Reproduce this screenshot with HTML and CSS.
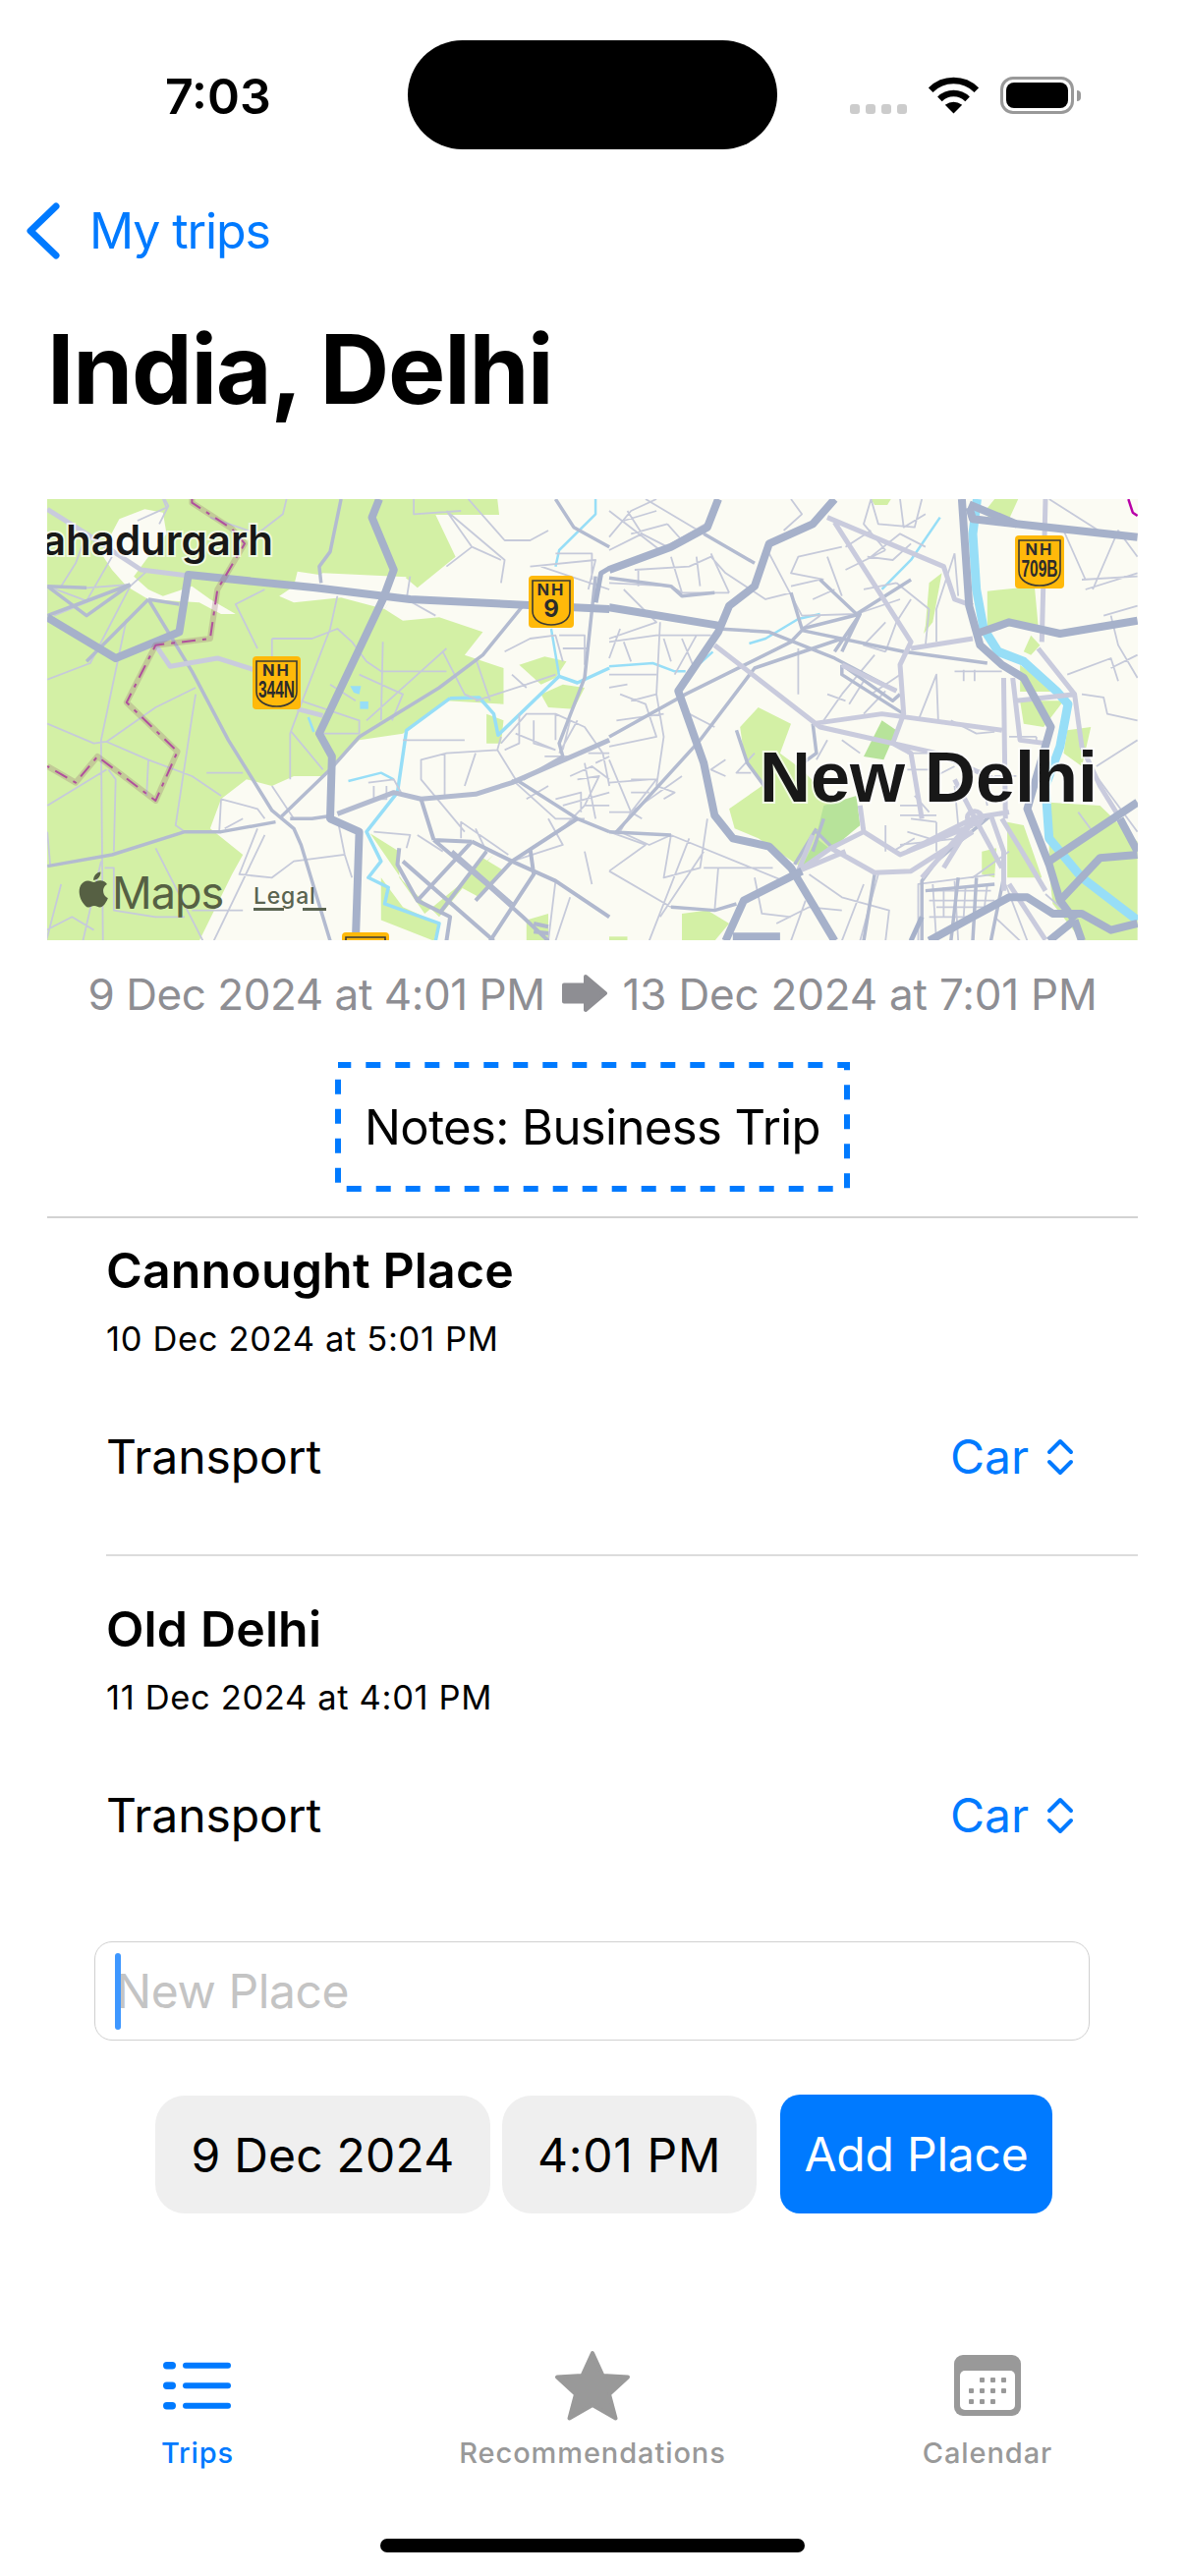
FILE: index.html
```html
<!DOCTYPE html>
<html lang="en">
<head>
<meta charset="utf-8">
<title>India, Delhi</title>
<link rel="stylesheet" href="styles.css">
</head>
<body>
<div class="phone">
  <div class="island"></div>
  <header class="status">
    <span class="time">7:03</span>
    <div class="status-icons">
      <div class="signal"><i></i><i></i><i></i><i></i></div>
      <svg class="wifi" viewBox="0 0 51 38"><path class="wifi-arc" d="M2.2 13.7A33 33 0 0 1 48.8 13.7"/><path class="wifi-arc" d="M11.4 22.9A20 20 0 0 1 39.6 22.9"/><path class="wifi-dot" d="M25.5 37.5L16.8 28.8Q25.5 22.5 34.2 28.8Z"/></svg>
      <div class="battery"><div class="battery-fill"></div></div>
      <div class="battery-nub"></div>
    </div>
  </header>
  <nav class="back">
    <svg class="back-chevron" viewBox="0 0 40 62"><path d="M32 6L6 31L32 56"/></svg>
    <span>My trips</span>
  </nav>
  <h1 class="title">India, Delhi</h1>
  <div class="map">
    <svg class="map-svg" viewBox="0 0 1110 449">
      <g transform="matrix(0.37 0 0 0.3333 -8 -8)">
        <path class="green" d="M0,24L1260,24L1265,72L1090,72L1145,200L1040,295L1005,262L950,360L1000,395L1100,385L1220,430L1170,500L1277,540L1277,650L1120,640L1000,740L880,760L780,870L700,870L640,900L570,880L500,940L470,1030L560,1110L530,1170L440,1373L0,1373Z"/>
        <path class="cream" d="M220,85L290,55L340,65L350,130L300,200L260,260L300,300L340,320L420,290L470,330L540,375L500,375L440,340L300,330L240,290L200,240L170,190Z"/>
        <path class="cream" d="M710,245L770,255L780,250L1010,262L950,360L830,325L700,340L660,320L700,290Z"/>
        <path class="green" d="M910,1045L1000,1190L1100,1300L1180,1190L1250,1110L1180,1180L1060,1290L990,1180L990,1100Z"/>
        <path class="green" d="M940,1180L1000,1270L1100,1320L1085,1373L940,1310Z"/>
        <path class="green" d="M1220,1120L1280,1160L1210,1240L1160,1210Z"/>
        <path class="green" d="M1320,530L1390,505L1450,520L1420,570L1380,590Z"/>
        <path class="green" d="M1380,620L1440,590L1500,600L1470,665L1400,660Z"/>
        <path class="green" d="M1230,680L1277,700L1270,770L1230,770Z"/>
        <path class="green" d="M1340,1310L1400,1290L1400,1373L1340,1373Z"/>
        <path class="water w3" d="M1130,632L1210,630L1250,680L1262,745L1430,565L1480,585L1568,540"/>
        <path class="water w3" d="M1130,632L1010,730L985,920L900,1040L940,1130L905,1180L960,1210L950,1260L1100,1320L1090,1373"/>
        <path class="water w2" d="M1408,420L1430,565"/>
        <path class="water w2" d="M1530,24L1530,70L1430,180L1420,230"/>
        <path class="water w2" d="M850,885L940,860L975,880"/>
        <path class="water w2" d="M740,690L755,735"/>
        <path class="water-fill" d="M855,595L885,595L880,620L865,615Z"/>
        <path class="water-fill" d="M882,642L905,642L905,665L882,665Z"/>
        <path class="thin" d="M345,24L355,45L330,100M22,290L130,295L250,285M22,575L140,525L250,290L300,240M40,380L250,285M200,200L130,335L22,290M240,390L170,760L175,1373M22,710L150,770L185,765L320,660L430,600M185,765L300,820L420,870L500,930M22,960L185,850M22,1040L30,1140M430,620L420,690L375,1020L400,1040M190,850L210,880L205,1100M320,1090L450,1373M460,860L560,860M300,820L295,930M600,480L540,345L620,300M640,450L750,450L820,420L860,460L900,520L940,550L1120,550M640,450L640,510M820,320L800,420L720,650L690,740L690,880M690,730L780,850M720,640L880,700L880,740L770,740M880,560L1000,620L970,700M945,460L940,700M1120,480L1040,560L900,700M1110,490L1170,620L1210,640M1170,1040L1050,880L1050,820L1120,800L1260,790L1270,750M1000,760L1170,760M1115,800L1115,930M1260,790L1310,880M1280,490L1350,450L1420,440L1440,520M1340,590L1420,560M1270,770L1340,680L1420,680L1500,720L1550,800L1568,900M1310,740L1420,790M1200,640L1340,590M1480,700L1430,800M1500,830L1530,1000M1300,880L1420,1000L1500,1000M1120,60L1280,210L1270,280M1180,24L1280,150L1350,150L1400,120M1350,230L1530,210L1510,300M1420,190L1520,190L1520,270M1380,230L1568,300M600,1030L550,1170L640,1180L700,1130L840,1110M820,1000L840,1110L860,1180M1010,1090L1020,1050L920,1040M500,940L495,1040M905,890L975,880L1000,930M920,900L920,940L955,940L955,900M620,1000L600,970L500,940M480,1373L620,1050M120,1373L170,1130M1160,1060L1160,1010L1290,1110M1420,1190L1400,1373M1460,1240L1420,1373M20,1340L90,1300L150,1340M270,90L350,50L340,24M680,24L670,70L600,130L470,80M1030,24L1030,70L1160,60M1020,260L1010,330L1090,380M1200,510L1240,640M800,590L870,640M560,1000L510,1030M1430,1040L1500,960M1440,960L1568,920M1460,870L1520,840L1568,880M1430,440L1500,440L1500,530M1440,480L1510,480M1320,680L1320,770L1280,790M1360,700L1360,770L1420,790M1420,680L1420,760M1510,800L1568,800M1480,880L1540,870L1500,960L1568,960M1420,940L1490,920L1490,980M1400,1000L1440,1080L1300,1130M1500,1100L1520,1200M1200,1030L1230,1100M1110,1100L1040,1050M180,1150L205,1150L205,1280L320,1300L400,1300M60,1200L20,1370M20,290L20,370M130,130L100,220L60,290M640,900L700,1000M420,1280L560,1280M1120,230L1190,170L1270,210M1190,170L1120,60M1300,560L1340,600M1390,810L1460,810M1460,700L1440,790M1530,830L1568,810M1340,940L1400,900M1200,800L1170,900"/>
        <path class="mid" d="M830,24L800,185L770,230L775,280M1420,24L1470,110L1568,170M1530,260L1500,570L1430,770L1440,810L1330,880M300,330L420,550L520,760L640,975L700,1030L720,1080L800,1373M22,1145L200,1110L400,1040L500,1040L650,1010M660,1000L800,850L880,750L1100,600L1220,500L1330,350M690,1000L750,1000L810,990M1310,880L1480,1000L1568,1040M22,290L130,295M250,285L130,380L22,290M22,380L250,285M130,520L300,330M300,330L385,345"/>
        <path class="mid wide" d="M820,985L975,920L1050,940L1200,925L1300,890L1568,760"/>
        <path class="grid" d="M1480,1000L1300,1130L1200,1250M990,1090L985,1140L1040,1250L1130,1300L1120,1373M1085,1065L1230,1200L1330,1300L1400,1373M1135,1100L1300,1260M1190,1070L1040,1250M1230,1100L1100,1290M1350,1090L1360,1170L1240,1373M1000,1130L1250,1373M1085,1065L1050,940M1190,1070L1300,1130L1420,1190L1568,1300M1085,1065L1190,1070M1360,1320L1400,1330M1360,1345L1400,1350"/>
        <path class="light" d="M22,55L130,130L280,240L410,258M320,470L360,535L490,510L590,545M710,665L780,685"/>
        <path class="major" d="M935,24L915,80L975,240L945,330L770,740L805,810L800,1000L880,1040L870,1373"/>
        <path class="major" d="M22,385L210,510L385,430L410,255L760,295L1020,330L1568,360"/>
        <path class="major thinner" d="M1568,235L1545,250L1530,340"/>
        <path class="border-halo" d="M420,24L420,35L530,115L565,160L490,300L470,450L320,470L240,645L380,795L320,945L160,810L100,890L22,840"/>
        <path class="border-dash" d="M420,24L420,35L530,115L565,160L490,300L470,450L320,470L240,645L380,795L320,945L160,810L100,890L22,840"/>
      </g>
      <g transform="matrix(0.37 0 0 0.3333 572 -8)">
        <path class="green" d="M720,24L775,24L765,42L730,42Z"/>
        <path class="green" d="M1060,24L1125,24L1100,85L1130,100L1060,95L1030,65Z"/>
        <path class="green" d="M1040,305L1170,290L1180,410L1130,410L1040,420Z"/>
        <path class="green" d="M1130,530L1230,612L1130,612Z"/>
        <path class="green" d="M1130,640L1250,640L1195,720L1140,710Z"/>
        <path class="green" d="M1260,730L1325,720L1300,840L1250,800Z"/>
        <path class="green" d="M1160,440L1185,470L1160,500L1140,490Z"/>
        <path class="green" d="M1095,1010L1140,1020L1190,1180L1095,1180Z"/>
        <path class="green" d="M1025,1100L1065,1090L1060,1180L1025,1170Z"/>
        <path class="green" d="M1210,950L1350,960L1453,1070L1453,1373L1300,1373L1220,1260L1210,1160Z"/>
        <path class="green" d="M360,720L410,660L500,710L470,800L530,850L600,930L690,1020L600,1090L530,1150L410,1060L345,1030L330,970L420,900L370,800Z"/>
        <path class="green-dark" d="M590,960L680,930L690,1020L620,1085L570,1050Z"/>
        <path class="green-dark" d="M700,810L750,700L790,730L755,820Z"/>
        <path class="green-dark" d="M530,1145L570,1060L605,1090Z"/>
        <path class="green" d="M200,1290L270,1280L330,1320L290,1373L200,1373Z"/>
        <path class="green" d="M880,280L915,250L890,400L865,435L870,410Z"/>
        <path class="green" d="M0,1360L50,1360L50,1373L0,1373Z"/>
        <path class="water river" d="M1012,24L1000,130L1010,300L1030,420L1070,490L1140,520L1230,610L1262,650L1240,780L1200,900L1210,1060L1300,1180L1453,1310"/>
        <path class="water w2" d="M0,535L120,525L180,550L210,550"/>
        <path class="water w2" d="M385,465L430,450L520,390L580,375"/>
        <path class="water w2" d="M750,300L830,210L910,80"/>
        <path class="water w2" d="M250,525L285,490"/>
        <path class="thin" d="M0,140L60,60L130,24M100,24L260,130L300,24M0,280L170,290L200,310L330,310M70,240L220,230L280,200L320,250L430,330L500,310M440,190L530,380L680,375M500,290L580,270L680,375L800,330M590,270L500,250L520,200L640,170M30,420L0,510M0,460L130,440L280,440M130,560L0,560M140,400L130,620L150,750L130,900M30,620L100,650L130,750L0,780M0,820L60,980L200,870M60,880L130,880L60,980L90,1000M60,980L30,1040L110,1080L170,1050L480,1190M0,1040L100,1080L0,1160M220,1060L110,1373M140,1300L260,1100M260,1150L450,1150M320,820L280,850L320,870M400,800L350,860L390,860M850,1373L850,1200L1060,1170M890,1200L900,1373M950,1190L960,1373M1010,1190L1000,1373M690,1373L740,1170M640,1373L700,1200M550,1170L640,1240L770,1280L760,1373M900,1270L1060,1270M1210,24L1360,130M1453,200L1400,120L1330,300M1300,270L1453,260M1453,350L1360,380M1380,380L1400,470L1453,570M1260,560L1380,510L1400,580M1300,620L1360,630L1370,680L1453,700M1340,840L1453,760M1340,870L1453,1040M1290,980L1330,1040M0,60L140,180L280,90M40,300L130,400L0,450M180,560L240,440M720,24L740,100L840,110L860,24M710,200L780,210L830,160M650,240L760,180M950,190L900,360L900,460M640,620L730,500M720,620L800,560M850,700L900,560L905,700M940,700L1010,740L1060,735M950,550L1080,550M975,545L975,580M1005,545L1005,580M1100,750L1175,750M1175,750L1175,770M1120,870L1060,870M820,800L900,800M800,990L900,990M820,1040L880,1060M800,1080L960,1060M760,1020L760,1100M1000,1180L1100,1100M1250,120L1310,270M1290,1320L1200,1230M40,90L130,60M60,130L160,100M0,180L90,130L160,170M90,130L50,60M160,100L200,150M80,240L80,290M170,200L200,310M240,200L250,290M280,190L330,310M500,24L530,70L480,120M720,24L700,100L760,180M800,24L810,110L870,70M720,200L800,130L870,170M650,170L720,120M600,200L640,320M700,300L790,280M790,280L880,360M760,400L700,470L760,490M880,360L870,470M830,330L790,400L760,490M950,190L960,320M560,330L620,300M530,420L580,380M40,460L60,520M150,450L170,520M200,450L230,530M0,600L50,590M60,640L130,620M20,700L150,680M220,680L290,720M0,890L110,880M60,920L110,920M130,900L180,920L150,940M0,980L60,980M600,620L650,640M660,650L700,580M590,700L640,620M700,680L760,610M520,480L520,620M640,760L690,800M600,760L570,820M170,1050L150,1180L250,1150L270,1000M0,1160L170,1270M300,1150L290,1280M400,1180L420,1290L500,1300M460,1320L550,1270L640,1280M540,1250L500,1373M590,1300L610,1373M870,1220L1050,1220M880,1250L1060,1250M880,1300L1000,1300M920,1210L920,1300M980,1210L975,1300M1040,1200L1030,1290M1090,1200L1150,1373M1060,1300L1130,1373M820,850L880,850M840,930L880,980M800,960L860,960M830,1000L900,1010M780,1100L840,1060M880,880L950,840M900,1010L900,1100M950,900L960,1020M1020,850L1040,960M1310,300L1453,250M1380,540L1453,500"/>
        <path class="mid" d="M0,750L210,620L500,460L530,425L810,490L1040,525M250,760L400,540L640,450M300,420L440,430L620,510L790,610M640,530L780,640L800,620M640,530L640,560L810,680M500,310L530,420L690,375L640,490M580,270L680,375L830,270M690,375L620,490M0,265L170,290L200,320L290,310M260,130L400,220M0,1040L170,1050M70,980L20,1040M70,980L250,760M170,1270L290,1280L350,1260M560,1100L590,1000M510,1140L570,1030M570,1040L615,1090M350,730L380,830L440,920M560,710L570,800L520,840M700,1373L730,1170M860,1373L860,1190L900,1130L1050,990M870,1220L1060,1200M940,1373L960,1180M1000,1373L1010,1180M1050,1373L1085,1180"/>
        <path class="light wide2" d="M600,80L920,230L950,330L1000,350M620,95L830,460L800,530L810,680L780,770L830,800M1200,24L1190,460M830,480L1000,450M1180,480L1280,620L1300,780L1350,900L1400,990M290,470L580,720L900,800L1060,880M560,710L750,680L1080,730M1080,1000L1130,1090M1130,1090L1200,1220M1120,640L1280,620M1085,570L1090,1000M1110,570L1130,760L1200,770M780,770L830,800L860,1000M640,530L790,610M1050,990L1085,1100L1085,1220M1005,997L820,1100M1005,997L860,1180M1005,997L920,1150M1005,997L1080,1150M1005,997L950,880M1005,997L1100,980M700,1040L610,1090L730,1165L830,1160L1000,1040M700,1040L800,1110L1000,1020M690,960L700,1040M650,1100L520,1160M610,1090L520,1160M560,1050L520,1160M1100,1200L1200,1370"/>
        <circle class="light" cx="1005" cy="997" r="20"/>
        <path class="major" d="M300,24L270,110L170,170L0,240"/>
        <path class="major" d="M620,24L560,100L440,160L400,290L330,350L300,430L190,610L260,830L290,990L340,1060L440,1085L500,1150L620,1373"/>
        <path class="major" d="M0,355L300,410"/>
        <path class="major" d="M970,24L990,350L1020,470L1080,530L1140,570L1215,720L1150,970L1210,1140L1240,1250L1280,1310"/>
        <path class="major" d="M1010,435L1100,400L1240,435L1453,395"/>
        <path class="major" d="M990,40L1120,100L1453,140"/>
        <path class="major" d="M990,50L1000,85L1120,100"/>
        <path class="major" d="M1210,1130L1453,950"/>
        <path class="major" d="M1240,1250L1350,1120L1453,1110"/>
        <path class="major" d="M880,1373L1000,1300L1100,1240L1150,1240L1220,1290L1300,1290L1380,1340L1453,1320"/>
        <path class="major" d="M530,1160L370,1250L320,1373"/>
        <path class="major" d="M1405,1000L1453,1100M1280,1310L1300,1373M1280,1310L1210,1373"/>
        <path class="major" d="M340,1360L470,1360"/>
        <path class="major thinner" d="M860,1300L830,1373"/>
        <path class="boundary" d="M1428,24L1440,65L1453,75"/>
      </g>

      <text class="label-bahadurgarh" x="230" y="57">Bahadurgarh</text>
      <text class="label-delhi" x="725" y="308">New Delhi</text>
      <path class="apple" transform="translate(25.700 376) scale(1.800)" d="M18.71 19.5c-.83 1.24-1.71 2.45-3.05 2.47-1.34.03-1.77-.79-3.29-.79-1.53 0-2 .77-3.27.82-1.31.05-2.3-1.32-3.14-2.53C4.25 17 2.94 12.45 4.7 9.39c.87-1.52 2.43-2.48 4.12-2.51 1.28-.02 2.5.87 3.29.87.78 0 2.26-1.07 3.81-.91.65.03 2.47.26 3.64 1.98-.09.06-2.17 1.28-2.15 3.81.03 3.02 2.65 4.03 2.68 4.04-.03.07-.42 1.44-1.38 2.83M13 3.5c.73-.83 1.94-1.46 2.94-1.5.13 1.17-.34 2.35-1.04 3.19-.69.85-1.83 1.51-2.95 1.42-.15-1.15.41-2.35 1.05-3.11z"/>
      <text class="label-maps" x="66" y="417">Maps</text>
      <text class="label-legal" x="210" y="412">Legal</text>
      <rect class="legal-line" x="210" y="416" width="31" height="3"/>
      <rect class="legal-line" x="260" y="416" width="24" height="3"/>

      <g transform="translate(490 78)">
        <rect class="shield-bg" width="46" height="53" rx="4"/>
        <path class="shield-line" d="M4 5H42V36C42 45 33 50 23 50C13 50 4 45 4 36Z"/>
        <text class="shield-nh" x="23" y="20">NH</text>
        <text class="shield-num big" x="23" y="42">9</text>
      </g>
      <g transform="translate(209 160)">
        <rect class="shield-bg" width="49" height="54" rx="4"/>
        <path class="shield-line" d="M4 5H45V36C45 46 35 51 24.500 51C14 51 4 46 4 36Z"/>
        <text class="shield-nh" x="24.500" y="20">NH</text>
        <text class="shield-num" x="24.500" y="42" textLength="37" lengthAdjust="spacingAndGlyphs">344N</text>
      </g>
      <g transform="translate(985 37)">
        <rect class="shield-bg" width="50" height="54" rx="4"/>
        <path class="shield-line" d="M4 5H46V36C46 46 36 51 25 51C14 51 4 46 4 36Z"/>
        <text class="shield-nh" x="25" y="20">NH</text>
        <text class="shield-num" x="25" y="42" textLength="37" lengthAdjust="spacingAndGlyphs">709B</text>
      </g>
      <g transform="translate(300 441)">
        <rect class="shield-bg" width="48" height="54" rx="4"/>
        <path class="shield-line" d="M4 5H44V36C44 46 34 51 24 51C14 51 4 46 4 36Z"/>
      </g>
    </svg>
  </div>
  <div class="dates">
    <span class="date-from">9 Dec 2024 at 4:01 PM</span>
    <svg class="arrow" viewBox="0 0 48 40"><path d="M3 11.500H25V3L45 20L25 37V28.500H3Z"/></svg>
    <span class="date-to">13 Dec 2024 at 7:01 PM</span>
  </div>
  <div class="notes">
    <svg class="notes-border" viewBox="0 0 524 132"><rect x="3" y="3" width="518" height="126"/></svg>
    <span>Notes: Business Trip</span>
  </div>
  <section class="places">
    <article class="place place-first">
      <h2 class="place-name">Cannought Place</h2>
      <p class="place-date">10 Dec 2024 at 5:01 PM</p>
      <div class="transport">
        <span>Transport</span>
        <span class="picker">Car
          <svg class="updown" viewBox="0 0 28 38"><path d="M3 14L14 3L25 14M3 24L14 35L25 24"/></svg>
        </span>
      </div>
    </article>
    <article class="place">
      <h2 class="place-name">Old Delhi</h2>
      <p class="place-date">11 Dec 2024 at 4:01 PM</p>
      <div class="transport">
        <span>Transport</span>
        <span class="picker">Car
          <svg class="updown" viewBox="0 0 28 38"><path d="M3 14L14 3L25 14M3 24L14 35L25 24"/></svg>
        </span>
      </div>
    </article>
  </section>
  <div class="input">
    <i class="caret"></i>
    <span>New Place</span>
  </div>
  <div class="actions">
    <div class="pill pill-date">9 Dec 2024</div>
    <div class="pill pill-time">4:01 PM</div>
    <div class="add">Add Place</div>
  </div>
  <footer class="tabs">
    <div class="tab tab-active">
      <div class="tab-icon">
        <svg class="ic-list" viewBox="0 0 70 50"><rect x="0" y="1" width="13" height="7.500" rx="3.700"/><rect x="20" y="1.800" width="49" height="6" rx="3"/><rect x="0" y="21.500" width="13" height="7.500" rx="3.700"/><rect x="20" y="22.300" width="49" height="6" rx="3"/><rect x="0" y="42" width="13" height="7.500" rx="3.700"/><rect x="20" y="42.800" width="49" height="6" rx="3"/></svg>
      </div>
      <span>Trips</span>
    </div>
    <div class="tab">
      <div class="tab-icon">
        <svg class="ic-star" viewBox="0 0 78 72"><path d="M39 3L49.500 26L75 27.500L56 45L62.500 69.500L39 56L15.500 69.500L22 45L3 27.500L28.500 26Z"/></svg>
      </div>
      <span>Recommendations</span>
    </div>
    <div class="tab">
      <div class="tab-icon">
        <svg class="ic-cal" viewBox="0 0 68 62"><rect class="cal-body" width="68" height="62" rx="9"/><rect class="cal-page" x="6" y="16" width="56" height="40" rx="5"/><g class="cal-dots"><rect x="26" y="23" width="5" height="5" rx="1"/><rect x="37" y="23" width="5" height="5" rx="1"/><rect x="48" y="23" width="5" height="5" rx="1"/><rect x="15" y="34" width="5" height="5" rx="1"/><rect x="26" y="34" width="5" height="5" rx="1"/><rect x="37" y="34" width="5" height="5" rx="1"/><rect x="48" y="34" width="5" height="5" rx="1"/><rect x="15" y="45" width="5" height="5" rx="1"/><rect x="26" y="45" width="5" height="5" rx="1"/><rect x="37" y="45" width="5" height="5" rx="1"/></g></svg>
      </div>
      <span>Calendar</span>
    </div>
  </footer>
  <div class="home"></div>
</div>
</body>
</html>
```
FILE: styles.css
```css
* { box-sizing: border-box; }
html, body { margin: 0; padding: 0; background: #fff; }
body { font-family: Inter, "Liberation Sans", sans-serif; color: #000; }
h1, h2, p { margin: 0; font: inherit; }

.phone { position: relative; width: 1206px; height: 2622px; overflow: hidden; background: #fff; display: flex; flex-direction: column; }
.island { position: absolute; left: 415px; top: 41px; width: 376px; height: 111px; border-radius: 56px; background: #000; }

.status { height: 160px; display: flex; justify-content: space-between; align-items: flex-start; }
.time { margin: 73px 0 0 168px; font-size: 50px; line-height: 1; font-weight: 600; letter-spacing: 0; }
.status-icons { display: flex; align-items: flex-end; margin: 78px 106px 0 0; }
.signal { display: flex; gap: 6px; margin-right: 22px; }
.signal i { width: 10px; height: 10px; border-radius: 3px; background: #ccc; }
.wifi { width: 51px; height: 38px; margin-right: 22px; }
.wifi-arc { fill: none; stroke: #000; stroke-width: 6.5; }
.wifi-dot { fill: #000; }
.battery { width: 75px; height: 38px; border: 3px solid #999; border-radius: 13px; padding: 3px; }
.battery-fill { width: 100%; height: 100%; background: #000; border-radius: 8px; }
.battery-nub { width: 4px; height: 11px; margin: 0 0 13px 3px; background: #999; border-radius: 0 4px 4px 0; }

.back { height: 167px; display: flex; align-items: flex-start; color: #007aff; font-size: 50px; line-height: 1; }
.back-chevron { width: 40px; height: 62px; margin: 44px 0 0 25px; }
.back-chevron path { fill: none; stroke: #007aff; stroke-width: 7; stroke-linecap: round; stroke-linejoin: round; }
.back span { margin: 50px 0 0 26px; letter-spacing: -1.100px; }

.title { height: 181px; padding-left: 48px; font-size: 98px; line-height: 1; font-weight: 700; letter-spacing: -1.300px; }

.map { margin: 0 48px; height: 449px; background: #fbfbf3; }
.map-svg { display: block; width: 1110px; height: 449px; }
.green { fill: #d3f0a5; }
.green-dark { fill: #b7e39a; }
.cream { fill: #fbfbf3; }
.water, .thin, .mid, .grid, .light, .major, .border-halo, .border-dash, .boundary { fill: none; vector-effect: non-scaling-stroke; stroke-linejoin: round; }
.water { stroke: #97def7; }
.w2 { stroke-width: 2.500px; }
.w3 { stroke-width: 3.500px; }
.river { stroke-width: 9px; }
.water-fill { fill: #97def7; }
.thin { stroke: #c6cada; stroke-width: 1.800px; }
.mid { stroke: #b3bbd0; stroke-width: 3.500px; }
.wide { stroke-width: 5px; }
.grid { stroke: #b0b8ce; stroke-width: 4px; }
.light { stroke: #c9cbdd; stroke-width: 5px; }
.wide2 { stroke-width: 5px; }
.major { stroke: #a6b1ca; stroke-width: 8px; }
.thinner { stroke-width: 5px; }
.border-halo { stroke: rgba(150, 105, 115, .28); stroke-width: 6px; }
.border-dash { stroke: #b0509c; stroke-width: 2px; stroke-dasharray: 14 7 4 7; }
.boundary { stroke: #b800a8; stroke-width: 2.500px; }
.label-bahadurgarh { font-size: 42px; font-weight: 600; text-anchor: end; fill: #181818; stroke: rgba(255,255,255,.7); stroke-width: 4px; paint-order: stroke; }
.label-delhi { font-family: "Liberation Sans", sans-serif; font-size: 72px; font-weight: 700; fill: #181818; stroke: rgba(255,255,255,.7); stroke-width: 4px; paint-order: stroke; }
.apple { fill: #566043; }
.label-maps { font-size: 45px; fill: #566043; letter-spacing: -1px; }
.label-legal { font-size: 23px; font-weight: 500; fill: #5a6450; letter-spacing: .8px; }
.legal-line { fill: #5a6450; }
.shield-bg { fill: #ffb90a; }
.shield-line { fill: none; stroke: #3a3a35; stroke-width: 1.600px; }
.shield-nh { font-size: 16.500px; font-weight: 700; fill: #2f2f2f; text-anchor: middle; letter-spacing: 2px; }
.shield-num { font-family: "Liberation Sans", sans-serif; font-size: 23px; font-weight: 700; fill: #2c2c2c; text-anchor: middle; }
.shield-num.big { font-family: Inter, sans-serif; font-size: 24px; }

.dates { height: 110px; display: flex; align-items: center; justify-content: center; gap: 12px; color: #8e8e93; font-size: 44px; }
.date-from { letter-spacing: -.45px; }
.date-to { letter-spacing: -.2px; }
.arrow { width: 48px; height: 40px; margin: -2px 3px 0 4px; }
.arrow path { fill: #8e8e93; stroke: #8e8e93; stroke-width: 4; stroke-linejoin: round; }

.notes { position: relative; align-self: center; margin-top: 14px; width: 524px; height: 132px; display: flex; align-items: center; justify-content: center; font-size: 49px; letter-spacing: -.6px; }
.notes-border { position: absolute; inset: 0; width: 524px; height: 132px; }
.notes-border rect { fill: none; stroke: #007aff; stroke-width: 6; stroke-dasharray: 15 15; stroke-dashoffset: 1.700; }

.places { margin: 25px 48px 0; border-top: 2px solid #d2d2d2; }
.place { margin-left: 60px; padding: 49px 65px 0 0; height: 343px; }
.place + .place { border-top: 2px solid #dcdcdc; }
.place-first { padding-top: 28px; margin-left: 0; padding-left: 60px; height: 342px; }
.place-name { font-size: 50px; line-height: 1; font-weight: 600; letter-spacing: .15px; }
.place-date { margin-top: 28px; font-size: 34.500px; line-height: 1; letter-spacing: .65px; }
.transport { margin-top: 78px; display: flex; justify-content: space-between; align-items: center; font-size: 48px; line-height: 1; letter-spacing: -.05px; }
.picker { display: flex; align-items: center; gap: 18px; color: #007aff; }
.updown { width: 28px; height: 38px; }
.updown path { fill: none; stroke: #007aff; stroke-width: 4; stroke-linecap: round; stroke-linejoin: round; }

.input { position: relative; margin: 51px 0 0 96px; width: 1013px; height: 101px; border: 1.500px solid #d0d0d0; border-radius: 18px; padding-left: 21px; display: flex; align-items: center; color: #c4c4c4; font-size: 48px; letter-spacing: -.4px; }
.caret { position: absolute; left: 20px; top: 11px; width: 6px; height: 78px; border-radius: 3px; background: #3e97ff; }

.actions { margin: 55px 0 0 158px; display: flex; align-items: flex-end; gap: 12px; font-size: 48px; }
.pill { height: 120px; border-radius: 30px; background: #efefef; display: flex; align-items: center; justify-content: center; }
.pill-date { width: 341px; letter-spacing: .2px; }
.pill-time { width: 259px; letter-spacing: .7px; }
.add { margin-left: 12px; width: 277px; height: 121px; border-radius: 20px; background: #007aff; color: #fff; display: flex; align-items: center; justify-content: center; letter-spacing: -.2px; }

.tabs { margin-top: 137px; display: flex; }
.tab { width: 402px; display: flex; flex-direction: column; align-items: center; color: #999; font-size: 29px; line-height: 1; font-weight: 500; letter-spacing: .9px; }
.tab-active { color: #007aff; }
.tab-icon { height: 76px; margin-bottom: 16px; display: flex; align-items: center; justify-content: center; }
.ic-list { width: 70px; height: 50px; }
.ic-list rect { fill: #007aff; }
.ic-star { width: 78px; height: 72px; }
.ic-star path { fill: #999; stroke: #999; stroke-width: 4; stroke-linejoin: round; }
.ic-cal { width: 68px; height: 62px; }
.cal-body, .cal-dots { fill: #999; }
.cal-page { fill: #fff; }

.home { align-self: center; margin-top: 73px; width: 432px; height: 14px; border-radius: 7px; background: #000; }
```
